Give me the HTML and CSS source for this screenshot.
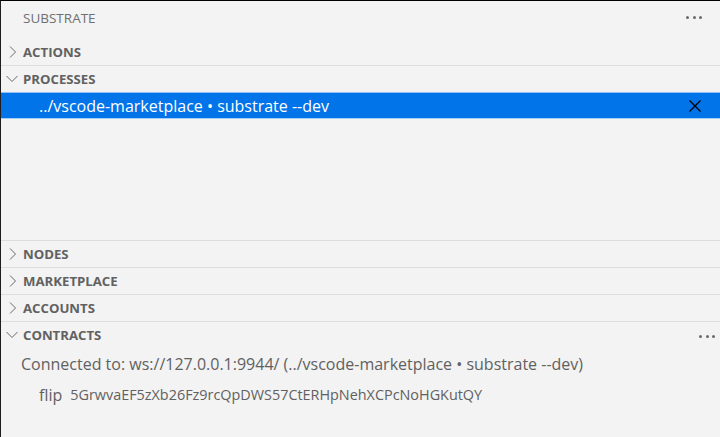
FILE: index.html
```html
<!DOCTYPE html>
<html>
<head>
<meta charset="utf-8">
<link rel="stylesheet" href="styles.css">
</head>
<body>
<div class="view">
  <div class="title">
    <span class="title-text">SUBSTRATE</span>
    <span class="dots"><i></i><i></i><i></i></span>
  </div>
  <div class="pane-header first">
    <svg class="chev" viewBox="0 0 16 16"><polyline points="6,2.5 11.5,8 6,13.5"/></svg>
    <span class="label">ACTIONS</span>
  </div>
  <div class="pane-header">
    <svg class="chev" viewBox="0 0 16 16"><polyline points="2.5,5 8,10.5 13.5,5"/></svg>
    <span class="label">PROCESSES</span>
  </div>
  <div class="processes">
    <div class="row selected">
      <span class="row-text">../vscode-marketplace • substrate --dev</span>
      <svg class="close" viewBox="0 0 16 16"><path d="M2.5 2.5L13.5 13.5M13.5 2.5L2.5 13.5"/></svg>
    </div>
  </div>
  <div class="pane-header">
    <svg class="chev" viewBox="0 0 16 16"><polyline points="6,2.5 11.5,8 6,13.5"/></svg>
    <span class="label">NODES</span>
  </div>
  <div class="pane-header">
    <svg class="chev" viewBox="0 0 16 16"><polyline points="6,2.5 11.5,8 6,13.5"/></svg>
    <span class="label">MARKETPLACE</span>
  </div>
  <div class="pane-header">
    <svg class="chev" viewBox="0 0 16 16"><polyline points="6,2.5 11.5,8 6,13.5"/></svg>
    <span class="label">ACCOUNTS</span>
  </div>
  <div class="pane-header">
    <svg class="chev" viewBox="0 0 16 16"><polyline points="2.5,5 8,10.5 13.5,5"/></svg>
    <span class="label">CONTRACTS</span>
    <span class="dots right"><i></i><i></i><i></i></span>
  </div>
  <div class="contracts">
    <div class="connected">Connected to: ws://127.0.0.1:9944/ (../vscode-marketplace • substrate --dev)</div>
    <div class="contract">
      <span class="name">flip</span>
      <span class="hash">5GrwvaEF5zXb26Fz9rcQpDWS57CtERHpNehXCPcNoHGKutQY</span>
    </div>
  </div>
</div>
</body>
</html>
```
FILE: styles.css
```css
html, body {
  margin: 0;
  padding: 0;
  background: #f3f3f3;
}
body {
  font-family: "Open Sans", "Noto Sans", sans-serif;
}
.view {
  width: 720px;
  height: 437px;
  box-sizing: border-box;
  border-top: 1px solid #000;
  border-left: 1px solid #1e1e1e;
  background: #f3f3f3;
  display: flex;
  flex-direction: column;
  overflow: hidden;
}
.title {
  height: 37px;
  flex: none;
  display: flex;
  align-items: center;
  justify-content: space-between;
  padding-left: 22px;
  padding-right: 18px;
  box-sizing: border-box;
}
.title-text {
  font-size: 13.5px;
  color: #6f6f6f;
  margin-top: -4px;
}
.dots {
  display: flex;
  gap: 3.5px;
  margin-top: -4px;
}
.dots i {
  display: block;
  width: 3px;
  height: 3px;
  border-radius: 50%;
  background: #6a6a6a;
}
.dots.right {
  margin-left: auto;
  margin-right: -13px;
  margin-top: 2px;
}
.pane-header {
  height: 27px;
  flex: none;
  box-sizing: border-box;
  border-top: 1px solid #dddddd;
  display: flex;
  align-items: center;
  padding-left: 3px;
  padding-right: 18px;
}
.pane-header.first {
  border-top: none;
  height: 27px;
}
.chev {
  width: 16px;
  height: 16px;
  flex: none;
  fill: none;
  stroke: #6a6a6a;
  stroke-width: 1;
}
.label {
  font-size: 13.2px;
  font-weight: 700;
  color: #616161;
  margin-left: 3px;
}
.processes {
  flex: 1;
}
.row {
  height: 27px;
  box-sizing: border-box;
  display: flex;
  align-items: center;
  padding-right: 17px;
}
.row.selected {
  background: #0074e8;
  border-top: 1px solid #8fc0f5;
  border-bottom: 1px solid #a8cdf5;
  margin-left: -1px;
  box-shadow: inset 1px 0 0 #f38518;
  padding-left: 39px;
}
.row-text {
  font-size: 16px;
  color: #ffffff;
  flex: 1;
}
.close {
  width: 16px;
  height: 16px;
  fill: none;
  stroke: #000;
  stroke-width: 1.3;
}
.contracts {
  height: 89px;
  flex: none;
  padding-top: 5px;
  box-sizing: border-box;
}
.connected {
  height: 22px;
  line-height: 22px;
  font-size: 16px;
  color: #616161;
  padding-left: 20px;
  white-space: nowrap;
}
.contract {
  height: 31px;
  display: flex;
  align-items: center;
  padding-left: 38px;
  margin-top: 4px;
  white-space: nowrap;
}
.name {
  font-size: 16px;
  color: #616161;
}
.hash {
  font-size: 14.4px;
  color: #616161;
  margin-left: 8px;
}
```
